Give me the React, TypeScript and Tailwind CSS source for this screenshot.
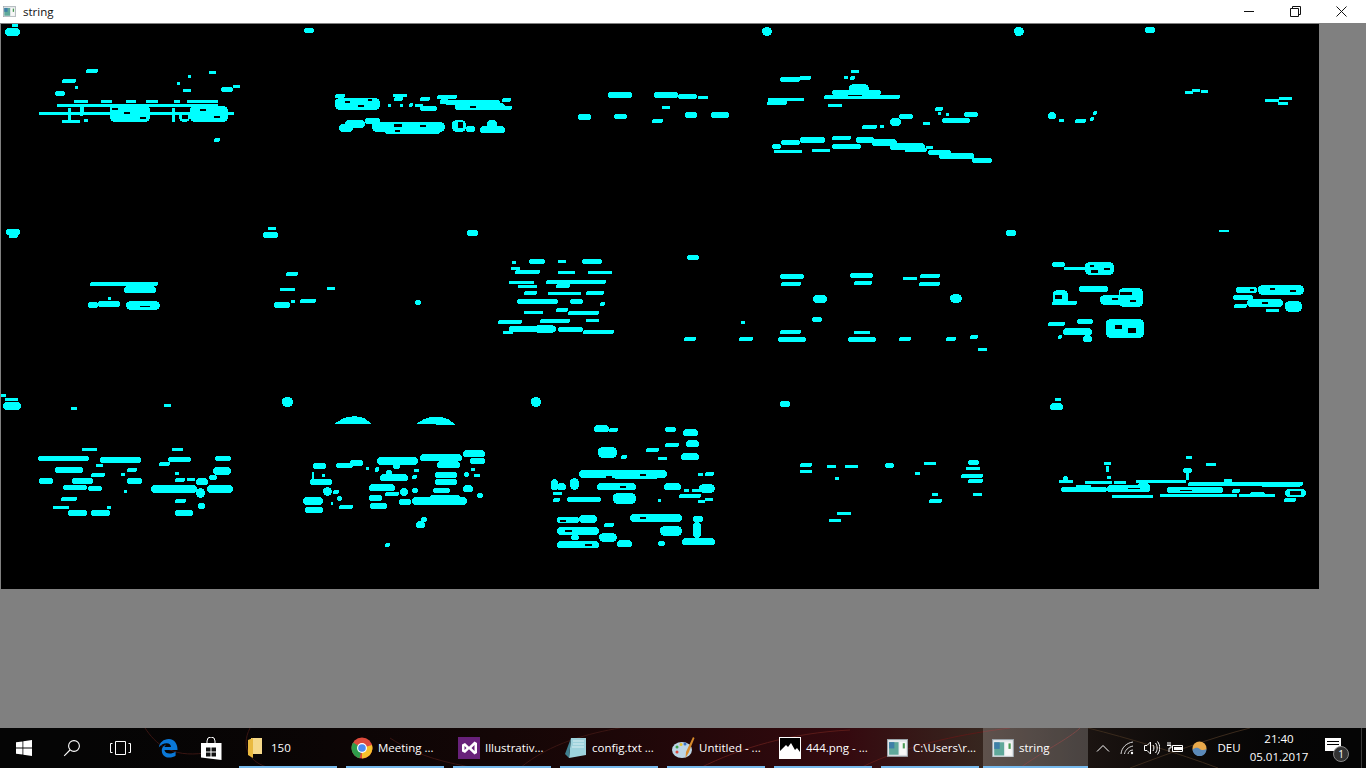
type Box = [number, number, number, number];

// blobs of the thresholded picture, as x1,y1,x2,y2 in page pixels
const BLOBS: Box[] = [
  // row 1
  [12,24,18,27],[5,28,20,36],[304,28,314,33],[762,27,772,36],[1014,27,1024,36],[1145,27,1155,33],
  [86,69,98,73],[62,79,76,83],[55,91,65,96],[75,86,78,89],[177,82,180,85],[188,75,191,78],[209,71,216,74],[183,89,191,92],[221,87,233,92],[233,85,240,88],
  [74,100,88,103],[101,100,112,103],[126,100,136,103],[146,100,158,103],[174,100,180,103],[187,100,218,103],
  [57,104,218,107],[39,112,234,115],[110,105,150,122],[190,106,228,122],[62,120,80,123],[68,108,71,120],[80,106,84,116],[172,108,175,122],[179,112,190,122],[84,119,88,122],[214,138,220,142],
  [335,94,345,98],[335,98,380,110],[393,94,407,97],[394,97,403,101],[388,104,391,107],[400,104,403,107],[409,103,413,107],
  [420,97,430,101],[415,104,423,107],[420,106,437,111],[437,95,457,99],[440,99,448,103],[440,100,500,105],[455,103,505,110],[502,98,511,102],[502,106,512,110],
  [339,124,353,132],[345,120,365,128],[365,118,380,124],[372,122,445,132],[385,128,440,134],[452,120,466,132],[466,126,475,132],[480,126,505,133],[487,120,497,128],
  [608,92,632,98],[654,92,678,98],[678,94,697,99],[698,96,708,99],[662,106,670,109],[578,114,591,120],[614,114,627,119],[652,119,663,123],[685,112,697,118],[711,112,729,118],
  [780,77,800,82],[799,76,811,80],[851,70,859,73],[844,76,848,79],[850,76,855,80],[849,84,869,93],[832,90,881,95],[824,95,900,99],[768,98,804,101],[767,101,787,105],[828,104,842,107],
  [935,107,943,111],[938,112,941,115],[946,113,949,116],[964,112,978,117],[942,118,970,123],[899,114,913,119],[890,118,901,126],[923,122,930,125],[862,125,877,129],[880,125,884,128],
  [800,137,825,143],[781,140,800,145],[772,144,781,149],[832,136,851,140],[832,144,861,149],[774,150,802,153],[812,149,830,152],
  [856,137,874,143],[872,139,897,146],[890,143,925,150],[905,148,927,152],[926,146,933,149],[928,150,951,155],[939,153,974,159],[972,158,992,163],
  [1048,112,1056,119],[1059,119,1064,122],[1075,119,1086,123],[1090,117,1094,121],[1093,111,1097,115],
  [1185,91,1193,94],[1192,89,1200,92],[1201,90,1208,93],[1265,99,1279,102],[1279,97,1292,100],[1278,102,1288,105],
  // row 2
  [6,229,20,235],[9,234,18,238],[268,227,276,230],[263,232,278,238],[467,230,478,236],
  [90,282,158,286],[124,286,156,293],[98,301,120,307],[88,302,98,308],[126,301,160,310],[108,297,111,300],
  [286,272,298,276],[280,288,295,291],[327,287,335,290],[274,302,290,308],[300,299,316,303],[291,300,295,303],[415,300,421,305],
  [512,261,516,264],[529,259,545,264],[558,260,566,263],[582,259,602,264],[515,270,540,274],[511,267,520,270],[558,271,575,274],[588,271,612,274],
  [509,281,534,284],[518,285,537,288],[546,280,606,284],[556,284,570,288],[524,291,537,295],[548,292,581,295],[586,291,604,295],
  [517,299,558,304],[570,299,583,304],[600,302,605,306],[524,311,543,314],[556,308,568,312],[568,311,599,315],[498,320,522,324],[540,319,570,323],[586,319,599,322],
  [509,326,556,332],[535,325,555,333],[558,327,583,332],[583,330,614,334],[503,331,513,334],
  [687,255,699,260],[780,274,804,279],[781,282,801,286],[850,273,873,278],[854,281,872,285],[903,277,917,280],[920,274,940,278],[919,282,940,286],
  [813,295,827,303],[950,294,962,303],[812,317,822,322],[741,321,745,324],[780,330,801,334],[778,337,806,342],[854,331,870,334],[848,337,876,342],
  [684,337,696,341],[739,337,753,341],[899,337,911,341],[946,337,956,341],[970,335,978,339],[978,348,987,351],[1006,230,1016,236],[1219,230,1229,232],
  [1052,262,1065,267],[1064,267,1089,270],[1085,262,1114,275],[1053,290,1068,305],[1052,301,1077,305],[1079,286,1108,292],[1100,295,1142,305],[1119,288,1143,307],
  [1048,322,1065,326],[1063,328,1092,335],[1077,319,1093,324],[1083,335,1092,342],[1058,335,1062,339],[1106,319,1144,338],
  [1236,287,1257,293],[1258,285,1304,295],[1233,295,1253,300],[1247,299,1283,307],[1234,304,1247,308],[1285,301,1302,312],[1266,309,1279,312],
  // row 3
  [1,394,6,397],[5,398,18,401],[3,402,21,410],[71,407,77,410],[164,404,171,407],[282,397,293,407],
  [82,448,97,451],[38,456,89,461],[100,457,141,463],[172,448,183,451],[159,462,170,466],[168,457,191,462],[215,456,231,461],
  [55,467,83,473],[96,464,103,467],[91,473,105,477],[127,468,137,472],[213,467,231,475],[121,473,125,476],[175,472,179,475],
  [39,478,53,484],[72,478,93,484],[127,478,142,484],[175,478,185,482],[187,478,195,481],[196,478,208,485],[209,475,217,480],
  [63,485,87,490],[88,486,102,491],[151,485,197,493],[207,485,233,493],[124,490,127,493],[196,488,205,498],[61,497,77,501],[175,499,186,503],[198,503,205,509],
  [53,506,69,509],[107,506,111,509],[68,510,87,516],[91,510,110,516],[175,510,193,516],
  [313,463,326,469],[336,463,353,468],[350,460,363,466],[377,457,418,465],[393,463,400,469],[420,454,462,461],[463,450,485,457],[437,461,460,468],[470,458,485,464],
  [375,467,379,472],[366,467,369,470],[380,474,408,481],[386,470,392,476],[414,469,419,472],[412,475,417,479],[435,472,457,478],[435,479,457,485],[464,472,469,477],[474,474,480,477],[471,468,475,471],
  [310,479,332,485],[312,472,314,480],[322,474,325,477],[369,484,395,491],[385,492,399,496],[400,488,408,496],[412,488,418,493],[433,488,450,493],[463,485,473,492],
  [323,487,332,496],[333,490,339,494],[337,496,342,501],[369,495,382,501],[412,497,467,505],[430,495,460,500],[399,499,411,505],[477,493,483,498],
  [303,497,323,505],[331,502,333,505],[339,505,353,509],[370,503,387,509],[305,507,323,513],[416,521,425,528],[421,517,427,522],[385,543,390,547],
  [531,397,541,407],[594,425,609,432],[609,428,618,432],[665,427,676,432],[683,429,698,436],[665,443,679,447],[686,440,699,447],[646,448,659,452],[598,447,617,458],[621,455,627,459],[658,457,667,460],[681,453,699,460],
  [579,470,667,478],[614,473,658,479],[705,472,714,476],[698,473,703,476],
  [551,479,558,490],[557,483,566,490],[570,478,579,490],[597,483,636,490],[664,483,681,490],[684,489,689,492],[692,489,700,492],[699,484,715,493],
  [553,492,562,495],[553,498,560,502],[567,497,601,502],[613,493,636,504],[658,499,661,502],[679,494,701,498],[698,500,705,503],[705,498,713,501],
  [557,517,579,523],[579,515,597,523],[630,514,682,522],[693,516,703,522],[693,522,701,538],[660,526,682,536],[604,523,614,527],
  [557,527,599,535],[571,535,579,540],[599,533,617,542],[617,540,632,547],[557,541,599,548],[658,541,665,546],[682,538,715,545],
  [780,401,790,407],[800,463,812,467],[800,470,812,473],[827,465,836,468],[845,465,858,468],[885,463,894,468],[924,462,936,465],[968,460,979,465],[966,467,980,470],[961,474,983,478],[968,479,983,483],
  [835,477,839,480],[915,472,920,475],[932,493,938,496],[929,499,942,503],[973,493,982,496],[837,512,851,515],[829,519,841,522],
  [1055,398,1061,401],[1050,403,1063,410],[1104,462,1111,465],[1106,466,1109,472],[1186,456,1192,459],[1206,463,1216,466],[1183,468,1192,473],[1186,473,1189,480],[1107,476,1111,479],
  [1063,476,1068,481],[1059,480,1073,483],[1085,481,1112,484],[1114,481,1126,484],[1136,480,1186,483],[1188,482,1303,486],[1224,479,1232,482],[1262,483,1301,487],
  [1061,487,1107,492],[1076,485,1091,487],[1107,485,1150,492],[1112,495,1153,498],[1137,483,1150,490],[1167,487,1223,493],[1160,494,1237,497],[1232,489,1240,493],[1239,494,1275,497],[1250,492,1265,497],[1285,489,1306,497],[1284,498,1296,502],
];

// dark gaps inside the blobs
const HOLES: Box[] = [
  [72,108,80,112],[154,108,172,112],[182,115,188,119],[1290,491,1301,495],[1115,325,1122,329],[1128,328,1136,333],[1120,292,1132,295],[1055,295,1062,299],[1091,270,1098,273],
  [848,95,862,96],[394,124,402,127],[458,122,463,128],[1128,488,1140,489],[1180,490,1192,491],[140,306,150,307],
  [345,101,350,103],[358,105,364,107],[368,99,372,101],[112,108,118,110],[124,112,130,114],[140,117,146,119],[200,109,206,111],[214,116,220,118],
  [1090,265,1094,267],[1104,268,1110,270],[1250,289,1254,291],[1270,288,1275,290],[1290,290,1296,292],[1262,302,1268,304],[1112,298,1118,300],[1130,300,1136,302],
  [395,130,400,132],[420,125,426,127],[440,104,446,106],[470,106,476,108],[606,476,612,478],[640,474,646,476],[620,486,626,488],[560,520,566,522],[640,517,646,519],[565,530,572,532],[585,544,592,546],
];

// the two bows at the top of row 3
const BOWS = ["M334 424 L342 419 Q353 414 364 418 L372 424 Z", "M416 424 L424 419 Q436 414 448 419 L456 425 Z"];

function BlobImage() {
  return (
    <svg viewBox="1 24 1318 565" width={1318} height={565} shapeRendering="crispEdges" className="block">
      {BLOBS.map(([a, b, c, d], i) => (
        <rect key={i} x={a} y={b} width={c - a} height={d - b} rx={Math.min(d - b, c - a, 9) / 2} fill="#00ffff" />
      ))}
      {BOWS.map((d) => (
        <path key={d} d={d} fill="#00ffff" />
      ))}
      {HOLES.map(([a, b, c, d], i) => (
        <rect key={i} x={a} y={b} width={c - a} height={d - b} fill="#000" />
      ))}
    </svg>
  );
}

function AppThumb({ size = 20 }: { size?: number }) {
  return (
    <svg width={size} height={size * 0.85} viewBox="0 0 20 17">
      <rect x="0.5" y="0.5" width="19" height="16" fill="#e6e9ec" stroke="#9aa3a8" />
      <rect x="2" y="3" width="9" height="12" fill="#5fa89a" />
      <rect x="2" y="3" width="5" height="6" fill="#3f7fa8" />
      <rect x="12" y="3" width="6" height="12" fill="#f7f7f7" />
      <rect x="15" y="4" width="2" height="5" fill="#4a9a55" />
    </svg>
  );
}

function TaskItem({ icon, label, active }: { icon: React.ReactNode; label: string; active?: boolean }) {
  return (
    <div className={`relative h-10 flex items-center shrink-0 ${active ? "w-[105px] bg-white/20" : "w-[98px]"}`}>
      <div className={`flex items-center justify-center shrink-0 ${active ? "w-[36px] pl-[3px]" : "w-[32px]"}`}>{icon}</div>
      <span className="text-[11.5px] text-white whitespace-nowrap">{label}</span>
      <div className="absolute left-0 right-0 bottom-0 h-[2px] bg-[#76b9ed]" />
    </div>
  );
}

export default function App() {
  return (
    <div className="w-[1366px] h-[768px] bg-[#808080] flex flex-col overflow-hidden font-['Open_Sans',sans-serif]">
      {/* window title */}
      <div className="h-[23px] bg-white flex items-center shrink-0">
        <div className="pl-[3px] w-[23px]"><AppThumb size={13} /></div>
        <span className="text-[11.5px] text-[#111]">string</span>
        <div className="ml-auto flex items-center">
          <div className="w-[46px] flex justify-center">
            <svg width="11" height="11" viewBox="0 0 11 11"><path d="M0 5.5h10" stroke="#111" fill="none" /></svg>
          </div>
          <div className="w-[46px] flex justify-center">
            <svg width="11" height="11" viewBox="0 0 11 11"><path d="M.5 2.5h8v8h-8zM2.500 2.500v-2h8v8h-2" stroke="#111" fill="none" /></svg>
          </div>
          <div className="w-[46px] flex justify-center mr-[2px]">
            <svg width="11" height="11" viewBox="0 0 11 11"><path d="M.5.5l10 10M10.500.5l-10 10" stroke="#111" fill="none" /></svg>
          </div>
        </div>
      </div>

      <div className="ml-px mt-px shrink-0 w-[1318px] h-[565px] bg-black">
        <BlobImage />
      </div>

      {/* taskbar */}
      <div className="relative mt-auto h-10 bg-[#050505] flex items-center shrink-0">
        <svg viewBox="0 0 1366 40" width={1366} height={40} className="absolute inset-0">
          <defs>
            <linearGradient id="wash" x1="0" x2="1" y1="0" y2="0">
              <stop offset="0" stopColor="#000" stopOpacity="0" />
              <stop offset="0.4" stopColor="#2a0808" stopOpacity="0.5" />
              <stop offset="0.62" stopColor="#3a0a10" stopOpacity="0.9" />
              <stop offset="0.72" stopColor="#3c2a22" stopOpacity="0.9" />
              <stop offset="0.8" stopColor="#1d1512" stopOpacity="0.9" />
              <stop offset="1" stopColor="#000" stopOpacity="0" />
            </linearGradient>
          </defs>
          <rect width="1366" height="40" fill="url(#wash)" />
          <path d="M145 0c10 15 25 30 60 25M250 0c-10 20 0 35 20 40M390 10c30 20 60 25 85 30M520 40c30-25 70-35 100-40" stroke="#3a1512" fill="none" />
          <path d="M700 40c40-20 90-35 150-38M860 40c50-25 110-35 150-40M1020 40c20-15 50-30 60-40" stroke="#5a1a18" fill="none" />
          <path d="M1088 0c40 10 90 25 130 40M1130 40c40-15 80-30 120-40" stroke="#3a2a1c" fill="none" />
          <path d="M1361.500 0v40" stroke="#3a3a3a" fill="none" />
        </svg>

        <div className="relative flex items-center h-10">
          <div className="w-12 flex justify-center shrink-0">
            <svg width="16" height="16" viewBox="0 0 16 16" fill="#fff"><path d="M0 2.300l6.500-.9v6.200H0zM7.300 1.300L16 0v7.600H7.300zM0 8.400h6.500v6.200L0 13.700zM7.300 8.400H16V16l-8.700-1.300z" /></svg>
          </div>
          <div className="w-12 flex justify-center shrink-0">
            <svg width="18" height="18" viewBox="0 0 18 18" fill="none" stroke="#fff" strokeWidth="1.1"><circle cx="11" cy="7" r="5.400" /><path d="M7 11l-5.800 5.800" /></svg>
          </div>
          <div className="w-12 flex justify-center shrink-0">
            <svg width="21" height="14" viewBox="0 0 21 14" fill="none" stroke="#fff"><path d="M5.500.5h10v13h-10zM2.500 2.500H.5v9h2M18.500 2.500h2v9h-2" /></svg>
          </div>
          <div className="w-[47px] flex justify-center shrink-0">
            <svg width="20" height="20" viewBox="0 0 20 20"><path d="M10.800 1C5.500 1 1.600 4.500.8 9.500 3 6.600 5.800 5.300 8.600 5.300c2.800 0 4.300 1.700 4.400 3.700H6.400c.6-1.300 1.200-2 2-2.500C4.800 7.600 3.800 10.600 3.800 12.700 3.800 16.800 7 19.600 11.200 19.600c2.400 0 4.800-.7 6.400-1.800v-4.300c-1.800 1.400-4 2.100-5.900 2.100-2.700 0-4.900-1.100-5.300-3.500H19.500c.3-5.600-2.700-11.100-8.700-11.100z" fill="#0a78d7" /></svg>
          </div>
          <div className="w-[48px] pr-[7px] flex justify-center shrink-0">
            <svg width="21" height="23" viewBox="0 0 21 23"><path d="M6 6V4a4 4 0 018 0v2" stroke="#fff" fill="none" /><path d="M0 6h20.500v17L0 20.500z" fill="#fff" /><path d="M5 10.500h4.500v4H5zM10.500 10.500h4.500v4h-4.500zM5 15.500h4.500v4H5zM10.500 15.500h4.500v4h-4.500z" fill="#111" /></svg>
          </div>

          <div className="flex items-center gap-[9px] h-10">
            <TaskItem label="150" icon={
              <svg width="14" height="20" viewBox="0 0 14 20"><path d="M3 0h11v16H3z" fill="#f6d98a" /><path d="M0 2l5-2v20l-5-3z" fill="#e9b93f" /></svg>
            } />
            <TaskItem label="Meeting ..." icon={
              <svg width="22" height="22" viewBox="0 0 22 22">
                <circle cx="11" cy="11" r="10.500" fill="#dd4a3c" />
                <path d="M11 11L21 8a10.500 10.500 0 01-10 13.500z" fill="#f6c12c" />
                <path d="M11 11l-2.500 10.200A10.500 10.500 0 012.100 5.400z" fill="#2f9c4a" />
                <circle cx="11" cy="11" r="5" fill="#fff" />
                <circle cx="11" cy="11" r="3.800" fill="#4a8bf0" />
              </svg>
            } />
            <TaskItem label="Illustrativ..." icon={
              <svg width="22" height="22" viewBox="0 0 22 22"><rect width="22" height="22" fill="#68217a" /><path d="M4 7.500L7 6l4 3.800L16.500 4.500 19 6v10l-2.500 1.500L11 12.200 7 16l-3-1.500zM6.500 9v4l2-2zM16.500 8l-3 3 3 3z" fill="#fff" fillRule="evenodd" /></svg>
            } />
            <TaskItem label="config.txt ..." icon={
              <svg width="22" height="22" viewBox="0 0 22 22"><path d="M6 1h15v17l-17 3z" fill="#9dd2dc" /><path d="M6 1L0 17l4 4z" fill="#3f7f8f" /><path d="M8 4h11M8 7h11M7 10h12" stroke="#d8eef2" /></svg>
            } />
            <TaskItem label="Untitled - ..." icon={
              <svg width="23" height="23" viewBox="0 0 23 23">
                <ellipse cx="10" cy="13" rx="10" ry="8" fill="#bcd5e6" />
                <circle cx="5" cy="10" r="1.500" fill="#3ba24b" /><circle cx="5" cy="15" r="1.500" fill="#d9463a" /><circle cx="9" cy="7.500" r="1.500" fill="#e7c32e" /><circle cx="13" cy="7" r="1.500" fill="#3a72c8" />
                <path d="M21 0l1.500 1-6 15-3 5 .5-6z" fill="#d98b2b" />
              </svg>
            } />
            <TaskItem label="444.png - ..." icon={
              <svg width="22" height="22" viewBox="0 0 22 22"><rect width="22" height="22" fill="#fff" /><path d="M1 1h20v14l-3-4-2 2-4-7-3 4-2-2-6 6z" fill="#000" /></svg>
            } />
            <TaskItem label="C:\Users\r..." icon={<AppThumb size={21} />} />
          </div>
          <div className="ml-[4px]">
            <TaskItem active label="string" icon={<AppThumb size={22} />} />
          </div>
        </div>

        {/* tray */}
        <div className="relative flex items-center h-10 ml-[6px] text-white">
          <div className="w-[18px] flex justify-center">
            <svg width="14" height="8" viewBox="0 0 14 8" fill="none" stroke="#fff"><path d="M1 7.500l6-6 6 6" /></svg>
          </div>
          <div className="w-[26px] pl-[4px] flex justify-center">
            <svg width="14" height="14" viewBox="0 0 14 14" fill="none" stroke="#ddd"><path d="M1 13C1.500 7 6 2 13 1M4.500 13C5 9.500 8 6 13 5M8 13c.2-2 2-4 5-4" /><circle cx="12" cy="12" r="1.200" fill="#fff" stroke="none" /></svg>
          </div>
          <div className="w-[24px] pl-[3px] flex justify-center">
            <svg width="16" height="14" viewBox="0 0 16 14" fill="none" stroke="#fff"><path d="M.5 4.500h2.500L6.500 1v12L3 9.500H.5zM9 4c1.200 1.800 1.200 4.200 0 6M11.500 2c2.200 3 2.200 7 0 10M13.500.5c3 4 3 9 0 13" /></svg>
          </div>
          <div className="w-[26px] flex justify-center">
            <svg width="16" height="12" viewBox="0 0 16 12" fill="none" stroke="#fff"><path d="M5.500 3.500h10v6h-10z" /><rect x="7" y="5" width="8" height="3" fill="#fff" stroke="none" /><path d="M1 0v3M3 0v3M0 3.500h4V6H2v4" /></svg>
          </div>
          <div className="w-[22px] flex justify-center">
            <svg width="15" height="15" viewBox="0 0 15 15"><circle cx="7.500" cy="7.500" r="7" fill="#e9a94b" /><path d="M.5 8.500c3-2.500 6-2 8 0 2 1 4 .5 6-.5A7 7 0 01.5 8.500z" fill="#5b89b8" /></svg>
          </div>
          <span className="text-[11.5px] w-[38px] text-center">DEU</span>
          <div className="w-[50px] ml-[6px] flex flex-col items-center text-[11.5px] leading-[18px]">
            <span>21:40</span>
            <span>05.01.2017</span>
          </div>
          <div className="relative ml-[21px] -mt-[8px] w-[16px] h-[13px] bg-white">
            <div className="absolute left-[2px] top-[3px] w-[12px] h-px bg-black" />
            <div className="absolute left-[2px] top-[6px] w-[12px] h-px bg-black" />
            <div className="absolute left-[8px] top-[8px] w-[16px] h-[16px] rounded-full bg-[#333] border border-[#888] text-[10px] leading-[14px] text-center text-white">1</div>
          </div>
        </div>
      </div>
    </div>
  );
}
